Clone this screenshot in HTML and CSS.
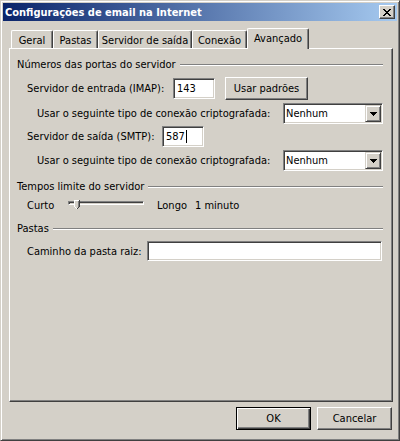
FILE: index.html
```html
<!DOCTYPE html>
<html lang="pt">
<head>
<meta charset="utf-8">
<title>Configurações de email na Internet</title>
<link rel="stylesheet" href="styles.css">
</head>
<body>
<div class="window">
  <div class="titlebar">
    <span class="title">Configurações de email na Internet</span>
    <div class="close">
      <svg width="8" height="7" viewBox="0 0 8 7" shape-rendering="crispEdges">
        <path d="M0 0h2v1h-2zM1 1h2v1h-2zM2 2h2v1h-2zM3 3h2v1h-2zM2 4h2v1h-2zM1 5h2v1h-2zM0 6h2v1h-2zM6 0h2v1h-2zM5 1h2v1h-2zM4 2h2v1h-2zM4 4h2v1h-2zM5 5h2v1h-2zM6 6h2v1h-2z" fill="#000"/>
      </svg>
    </div>
  </div>
  <div class="body">
    <div class="tabs">
      <div class="tab tab-geral">Geral</div>
      <div class="tab tab-pastas">Pastas</div>
      <div class="tab tab-saida">Servidor de saída</div>
      <div class="tab tab-conexao">Conexão</div>
      <div class="tab active">Avançado</div>
    </div>
    <div class="panel">
      <div class="group-head"><span>Números das portas do servidor</span><span class="rule"></span></div>
      <div class="row row-imap">
        <span class="label w-imap">Servidor de entrada (IMAP):</span>
        <div class="textbox port">143</div>
        <div class="btn btn-defaults">Usar padrões</div>
      </div>
      <div class="row row-crypt1">
        <span class="label">Usar o seguinte tipo de conexão criptografada:</span>
        <div class="select"><span class="select-text">Nenhum</span><span class="select-arrow"><svg width="7" height="4" viewBox="0 0 7 4" shape-rendering="crispEdges"><path d="M0 0h7v1h-7zM1 1h5v1h-5zM2 2h3v1h-3zM3 3h1v1h-1z" fill="#000"/></svg></span></div>
      </div>
      <div class="row row-smtp">
        <span class="label w-smtp">Servidor de saída (SMTP):</span>
        <div class="textbox port">587<span class="caret"></span></div>
      </div>
      <div class="row row-crypt2">
        <span class="label">Usar o seguinte tipo de conexão criptografada:</span>
        <div class="select"><span class="select-text">Nenhum</span><span class="select-arrow"><svg width="7" height="4" viewBox="0 0 7 4" shape-rendering="crispEdges"><path d="M0 0h7v1h-7zM1 1h5v1h-5zM2 2h3v1h-3zM3 3h1v1h-1z" fill="#000"/></svg></span></div>
      </div>
      <div class="group-head gh-timeout"><span>Tempos limite do servidor</span><span class="rule"></span></div>
      <div class="row row-slider">
        <span class="label w-curto">Curto</span>
        <div class="slider">
          <div class="track"></div>
          <svg class="thumb" width="6" height="10" viewBox="0 0 6 10" shape-rendering="crispEdges">
            <path d="M0 0h6v7l-3 3l-3-3z" fill="#D4D0C8"/>
            <path d="M0 0h5v1h-4v6h-1z" fill="#fff"/>
            <path d="M5 0h1v7h-1zM4 7h1v1h-1zM3 8h1v1h-1z" fill="#404040"/>
            <path d="M4 1h1v6h-1z" fill="#808080"/>
            <path d="M1 7h1v1h-1zM2 8h1v1h-1z" fill="#fff"/>
          </svg>
        </div>
        <span class="label w-longo">Longo</span>
        <span class="label">1 minuto</span>
      </div>
      <div class="group-head gh-folders"><span>Pastas</span><span class="rule"></span></div>
      <div class="row row-path">
        <span class="label w-path">Caminho da pasta raiz:</span>
        <div class="textbox path"></div>
      </div>
    </div>
    <div class="footer">
      <div class="btn btn-default">OK</div>
      <div class="btn">Cancelar</div>
    </div>
  </div>
</div>
</body>
</html>
```
FILE: styles.css
```css
* { box-sizing: border-box; }
html, body { margin: 0; padding: 0; }
body {
  width: 400px;
  height: 441px;
  overflow: hidden;
  background: #D4D0C8;
  font-family: "DejaVu Sans Condensed", "DejaVu Sans", "Liberation Sans", sans-serif;
  font-size: 11px;
  color: #000;
}
.window {
  width: 400px;
  height: 441px;
  background: #D4D0C8;
  border: 1px solid;
  border-color: #D4D0C8 #404040 #404040 #D4D0C8;
  box-shadow: inset 1px 1px #fff, inset -1px -1px #808080;
  padding: 2px;
  display: flex;
  flex-direction: column;
}
.titlebar {
  height: 18px;
  background: linear-gradient(to right, #0A246A, #A6CAF0);
  display: flex;
  align-items: center;
  justify-content: space-between;
  padding: 0 2px 0 2px;
}
.title {
  color: #fff;
  font-weight: bold;
  font-size: 11px;
  line-height: 13px;
}
.close {
  width: 16px;
  height: 14px;
  background: #D4D0C8;
  border: 1px solid;
  border-color: #fff #404040 #404040 #fff;
  box-shadow: inset -1px -1px #808080;
  display: flex;
  align-items: center;
  justify-content: center;
}
.body {
  flex: 1;
  padding: 7px 0 0 6px;
}
.tabs {
  height: 20px;
  display: flex;
  align-items: flex-end;
  padding-left: 2px;
  position: relative;
  z-index: 1;
}
.tab {
  height: 18px;
  padding: 1px 0 0 0;
  display: flex;
  align-items: center;
  justify-content: center;
  border-top: 1px solid #fff;
  border-left: 1px solid #fff;
  border-right: 1px solid #404040;
  box-shadow: inset -1px 0 #808080;
  border-radius: 2px 2px 0 0;
  line-height: 13px;
  white-space: nowrap;
}
.tab-geral { width: 42px; }
.tab-pastas { width: 45px; }
.tab-saida { width: 94px; }
.tab-conexao { width: 55px; }
.tab.active {
  width: 62px;
  height: 21px;
  margin: 0 0 -1px 0;
  padding: 0 0 2px 0;
  background: #D4D0C8;
}
.panel {
  width: 384px;
  height: 354px;
  border: 1px solid;
  border-color: #fff #404040 #404040 #fff;
  box-shadow: inset -1px -1px #808080;
  padding: 9px 9px 0 7px;
}
.group-head {
  height: 13px;
  line-height: 13px;
  display: flex;
  align-items: center;
  gap: 4px;
  white-space: nowrap;
}
.rule {
  flex: 1;
  height: 2px;
  border-top: 1px solid #808080;
  border-bottom: 1px solid #fff;
}
.row {
  display: flex;
  align-items: center;
  padding-left: 10px;
  line-height: 13px;
  white-space: nowrap;
}
.row-imap { height: 23px; margin-top: 6px; }
.row-crypt1, .row-crypt2 { height: 21px; padding-left: 20px; justify-content: space-between; }
.row-crypt1 { margin-top: 3px; }
.row-smtp { height: 21px; margin-top: 2px; }
.row-crypt2 { margin-top: 3px; }
.gh-timeout { margin-top: 9px; }
.row-slider { height: 13px; margin-top: 6px; }
.gh-folders { margin-top: 10px; }
.row-path { height: 20px; margin-top: 6px; }

.w-imap { width: 146px; }
.w-smtp { width: 135px; }
.w-path { width: 120px; }
.w-curto { width: 41px; }
.w-longo { width: 38px; }

.textbox {
  background: #fff;
  border: 1px solid;
  border-color: #808080 #fff #fff #808080;
  box-shadow: inset 1px 1px #404040, inset -1px -1px #D4D0C8;
  padding: 0 3px;
  display: flex;
  align-items: center;
  line-height: 13px;
}
.port { width: 42px; height: 21px; }
.path { width: 235px; height: 20px; }
.caret {
  display: inline-block;
  width: 1px;
  height: 13px;
  background: #000;
  margin-left: 1px;
}
.btn {
  width: 75px;
  height: 23px;
  background: #D4D0C8;
  border: 1px solid;
  border-color: #fff #404040 #404040 #fff;
  box-shadow: inset -1px -1px #808080;
  display: flex;
  align-items: center;
  justify-content: center;
  line-height: 13px;
}
.btn-defaults { width: 83px; margin-left: 10px; }
.btn-default {
  border-color: #000;
  box-shadow: inset 1px 1px #fff, inset -1px -1px #404040, inset -2px -2px #808080;
}
.select {
  width: 100px;
  height: 21px;
  background: #fff;
  border: 1px solid;
  border-color: #808080 #fff #fff #808080;
  box-shadow: inset 1px 1px #404040, inset -1px -1px #D4D0C8;
  padding: 1px 1px 1px 2px;
  display: flex;
  align-items: center;
  justify-content: space-between;
}
.select-text { line-height: 13px; }
.select-arrow {
  width: 16px;
  height: 17px;
  background: #D4D0C8;
  border: 1px solid;
  border-color: #D4D0C8 #404040 #404040 #D4D0C8;
  box-shadow: inset 1px 1px #fff, inset -1px -1px #808080;
  display: flex;
  align-items: center;
  justify-content: center;
}
.slider {
  width: 76px;
  height: 13px;
  margin-right: 13px;
  position: relative;
}
.track {
  margin-top: 2px;
  height: 4px;
  border: 1px solid;
  border-color: #808080 #fff #fff #808080;
  box-shadow: inset 1px 1px #404040;
}
.thumb {
  position: absolute;
  left: 6px;
  top: 1px;
}
.footer {
  width: 384px;
  display: flex;
  justify-content: flex-end;
  gap: 6px;
  margin-top: 5px;
  padding-right: 1px;
}
```
